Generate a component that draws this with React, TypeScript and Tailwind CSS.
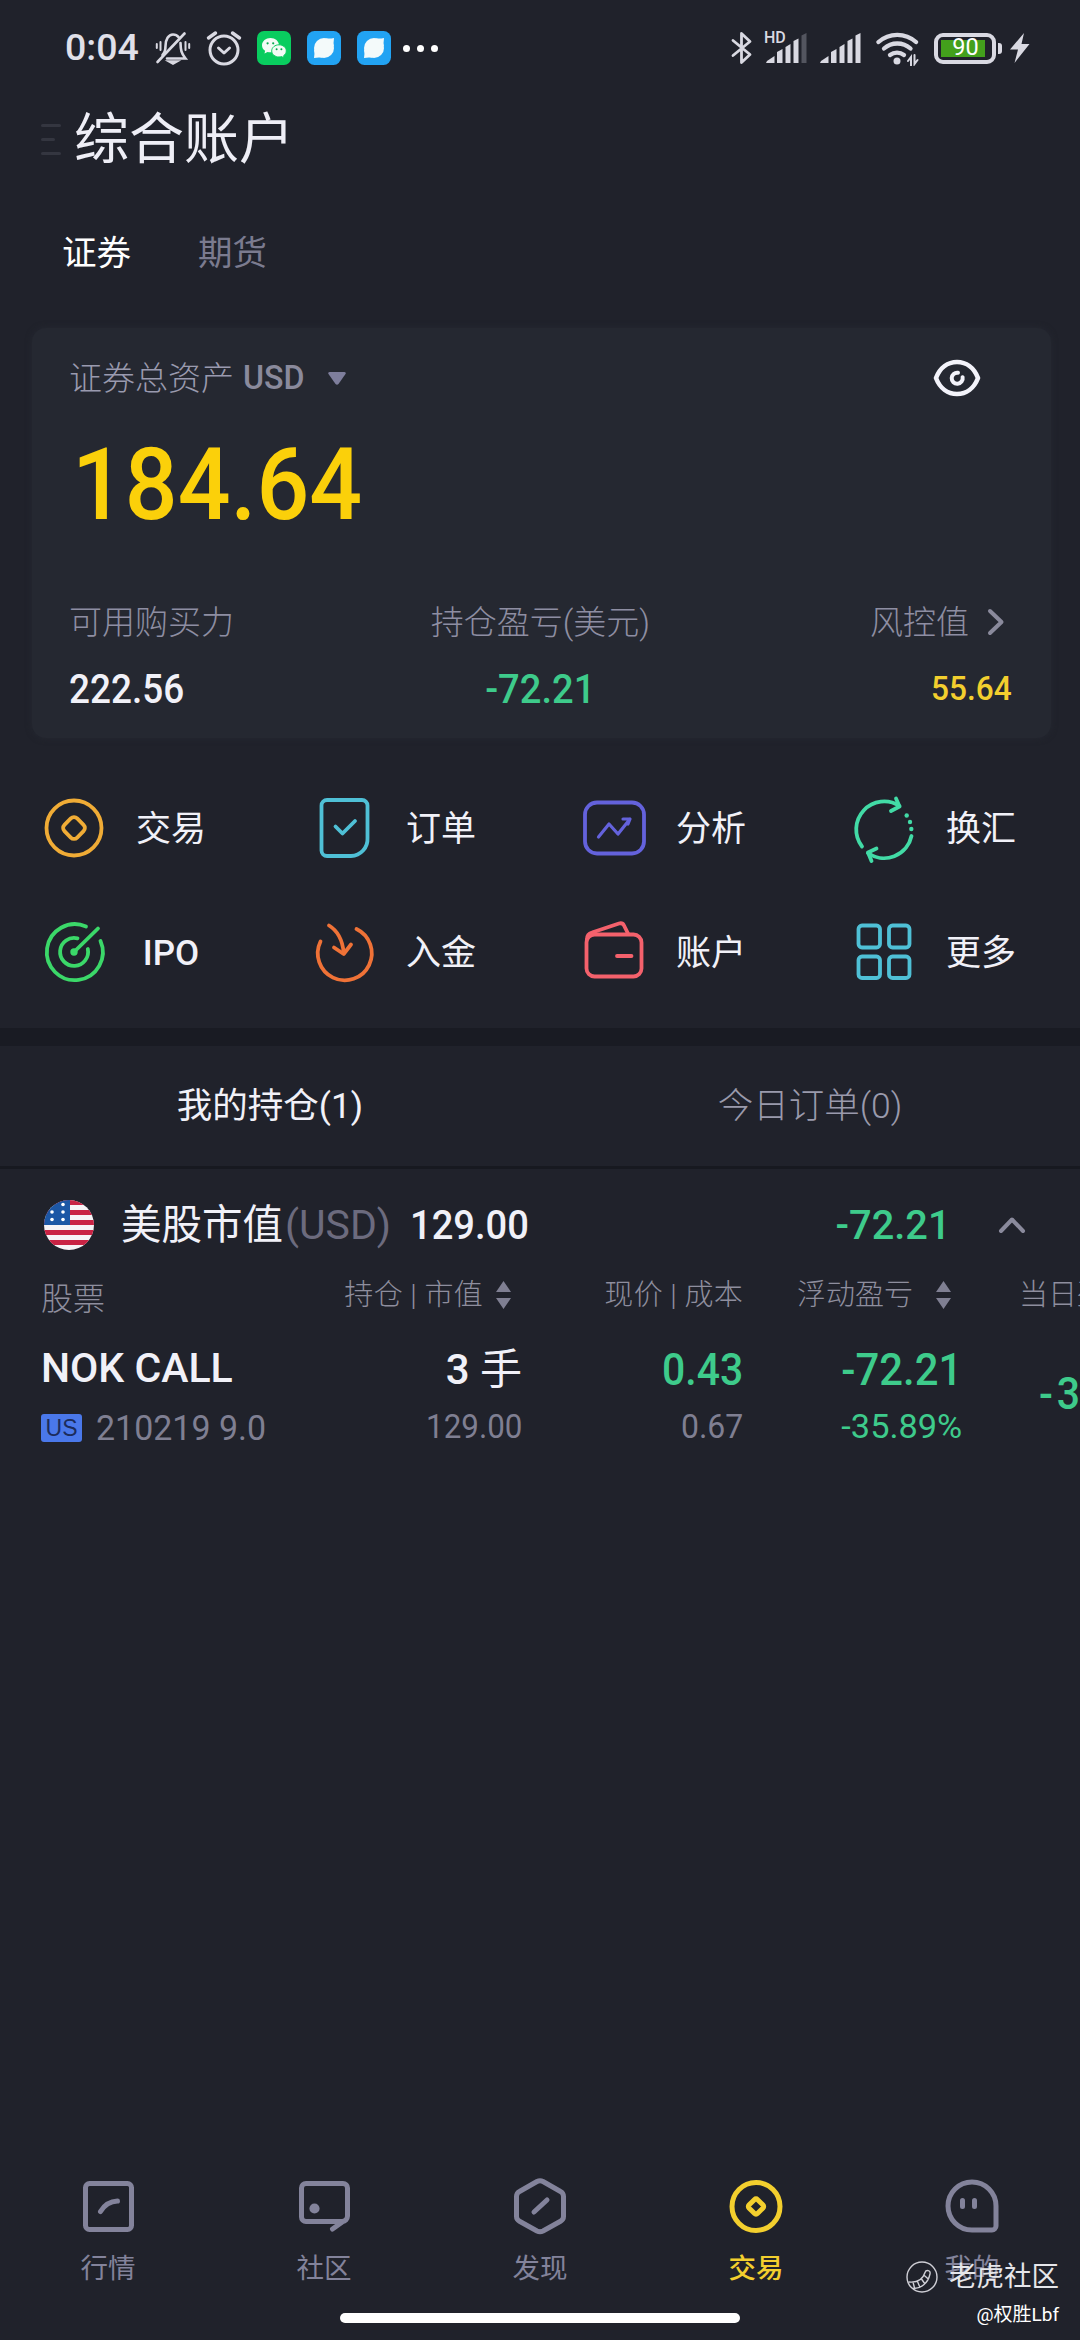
import type { ReactNode } from 'react'

type Tone = 'white' | 'green' | 'yellow' | 'gold' | 'muted'

const TONE: Record<Tone, string> = {
  white: 'text-[#f1f1f8]',
  green: 'text-[#3ecb8b]',
  yellow: 'text-[#f3cf2e]',
  gold: 'text-[#fbd00a]',
  muted: 'text-[#7f7f92]',
}

// Narrow digits, close to a DIN face
function Num({ children, tone, className, fit = 'scale-x-[0.93]' }: {
  children: ReactNode
  tone: Tone
  className: string
  fit?: string
}) {
  return (
    <span className={`inline-block whitespace-nowrap leading-none ${fit} ${TONE[tone]} ${className}`}>
      {children}
    </span>
  )
}

/* ---------- status bar ---------- */

function BellOff() {
  return (
    <svg width="36" height="36" viewBox="0 0 36 36" fill="none" stroke="#d9d9e2" strokeWidth="2.6" strokeLinecap="round">
      <path d="M7.500 25c2.500-2.500 3-5 3-9C10.500 9.500 13.500 4.500 18 4.500c2.500 0 4.300 1 5.600 2.600" />
      <path d="M25.500 13c.2 7 .7 10 5 15.500H12" />
      <path d="M29.500 3.500L2.500 32" />
      <path d="M14.500 31.500h7l-3.500 2z" fill="#d9d9e2" />
      <path d="M5.500 12v8M1.800 14v4M30.500 12v8M34.200 14v4" strokeWidth="2" />
    </svg>
  )
}

function Alarm() {
  return (
    <svg width="36" height="36" viewBox="0 0 36 36" fill="none" stroke="#d9d9e2" strokeWidth="3" strokeLinecap="round" strokeLinejoin="round">
      <circle cx="18" cy="20" r="14" />
      <path d="M12.500 18l5.500 5 5.500-5" />
      <path d="M2.500 8l7-5M33.500 8l-7-5" strokeWidth="3.400" />
    </svg>
  )
}

function WeChat() {
  return (
    <svg width="34" height="34" viewBox="0 0 34 34">
      <rect width="34" height="34" rx="7" fill="#09cd5f" />
      <path d="M13.500 7C8.800 7 5 10.200 5 14.200c0 2.300 1.200 4.300 3.100 5.600l-.6 2.700 3-1.600c1 .3 2 .4 3 .4 4.700 0 8.500-3.100 8.500-7.100S18.200 7 13.500 7z" fill="#f4fbf6" />
      <path d="M22 13.800c-4 0-7.300 2.700-7.300 6.100S18 26 22 26c.9 0 1.800-.1 2.600-.4l2.500 1.400-.5-2.300c1.600-1.100 2.700-2.900 2.700-4.800 0-3.400-3.300-6.100-7.300-6.100z" fill="#f4fbf6" stroke="#09cd5f" strokeWidth="1" />
      <g fill="#08a850">
        <circle cx="10.600" cy="12.300" r="1.100" />
        <circle cx="16.200" cy="12.300" r="1.100" />
        <circle cx="19.600" cy="18.200" r="1" />
        <circle cx="24.400" cy="18.200" r="1" />
      </g>
    </svg>
  )
}

function BlueApp() {
  return (
    <svg width="34" height="34" viewBox="0 0 34 34">
      <rect width="34" height="34" rx="7.500" fill="#22a3f3" />
      <circle cx="17" cy="17" r="10" fill="#f4fafa" />
      <path d="M18 7.200q4.500.8 9-.2-.8 4.500 0 9zM16 26.800q-4.500-.8-9 .2.800-4.500 0-9z" fill="#f4fafa" />
    </svg>
  )
}

function Bluetooth() {
  return (
    <svg width="22" height="36" viewBox="0 0 22 36" fill="none" stroke="#d9d9e2" strokeWidth="2.800" strokeLinejoin="round" strokeLinecap="round">
      <path d="M2 10.500l17 14-8.500 8V3.500l8.500 8-17 14" />
    </svg>
  )
}

function Signal({ hd }: { hd?: boolean }) {
  return (
    <div className="relative">
      {hd && <span className="absolute -top-[3px] -left-[2px] text-[16px] leading-[18px] font-medium text-[#d9d9e2]">HD</span>}
      <svg width="42" height="32" viewBox="0 0 42 32" fill="#d9d9e2">
        <path d="M0 31l1-2 7.500-5V31z" />
        <path d="M11 20l5.500-3V31H11z" />
        <path d="M19.500 15l5-3V31h-5z" />
        <path d="M27.500 9l5-2.500V31h-5z" />
        <path d="M35.500 3.500l5-2.500V31h-5z" fill={hd ? '#53555f' : '#d9d9e2'} />
      </svg>
    </div>
  )
}

function Wifi() {
  return (
    <svg width="43" height="36" viewBox="0 0 43 36" fill="none" stroke="#d9d9e2" strokeWidth="4.300" strokeLinecap="round">
      <path d="M2.500 12a28 28 0 0 1 37.500 0" />
      <path d="M8 18.500a20 20 0 0 1 26.500 0" />
      <path d="M14 25a11.500 11.500 0 0 1 14 0" />
      <circle cx="21" cy="31" r="3.500" fill="#d9d9e2" stroke="none" />
      <path d="M35 35.500V27l-3 4M38.500 25v9l3-4" strokeWidth="2" />
    </svg>
  )
}

function Battery() {
  return (
    <div className="flex items-center gap-[2px]">
      <div className="flex h-[31px] w-[62px] items-center rounded-[9px] border-[4px] border-[#d9d9e2] pl-[3px]">
        <div className="flex h-[17px] w-[44px] items-center justify-center bg-[#43a01c] pl-[5px] text-[23.500px] leading-none text-white">
          90
        </div>
      </div>
      <div className="h-[11px] w-[4px] rounded-r-[3px] bg-[#d9d9e2]" />
    </div>
  )
}

function StatusBar() {
  return (
    <div className="flex h-[96px] items-center pr-[50px] pl-[65px]">
      <span className="w-[74px] text-[37.500px] leading-none font-medium text-[#e0e0e9]">0:04</span>
      <div className="ml-[16px] flex items-center gap-[15px]">
        <BellOff />
        <Alarm />
        <div className="flex gap-[16px]">
          <WeChat />
          <BlueApp />
          <BlueApp />
        </div>
      </div>
      <div className="ml-[12px] flex gap-[7px]">
        <i className="size-[7px] rounded-full bg-white" />
        <i className="size-[7px] rounded-full bg-white" />
        <i className="size-[7px] rounded-full bg-white" />
      </div>
      <div className="ml-auto flex items-center">
        <Bluetooth />
        <div className="ml-[13px] flex gap-[12px]">
          <Signal hd />
          <Signal />
        </div>
        <div className="mr-[15px] ml-[14px]"><Wifi /></div>
        <Battery />
        <svg className="ml-[8px]" width="20" height="30" viewBox="0 0 20 30" fill="#d9d9e2">
          <path d="M14 0L0 16.500h8L4.500 30 19.500 11h-8z" />
        </svg>
      </div>
    </div>
  )
}

/* ---------- account card ---------- */

function AssetCard() {
  return (
    <section className="mr-[29px] ml-[32px] mt-[33px] flex h-[410px] flex-col rounded-[14px] bg-[#252831] pr-[39px] pl-[37px] shadow-[0_0_6px_#252831]">
      <div className="mt-[30px] flex h-[40px] items-center">
        <span className="text-[33px] leading-none font-light text-[#9a9aae]">证券总资产</span>
        <span className="ml-[9px] origin-left scale-x-[0.96] text-[33.500px] leading-none font-medium text-[#8a8a9c]">USD</span>
        <svg className="ml-[21px]" width="18" height="13" viewBox="0 0 18 13" fill="#7e7e9c">
          <path d="M1.500 0h15q2 .5 1 2l-7 10q-1.500 1.500-3 0l-7-10q-1-1.500 1-2z" />
        </svg>
        <svg className="mr-[31px] ml-auto" width="48" height="40" viewBox="0 0 48 40" fill="none" stroke="#f3f3fa" strokeWidth="4.600" strokeLinecap="round">
          <path d="M3 20C7 9.500 15 4 24 4S41 9.500 45 20C41 30.500 33 36 24 36S7 30.500 3 20z" strokeLinejoin="round" />
          <path d="M25 14.800a5.500 5.500 0 1 0 4.600 4.400" strokeWidth="4" />
        </svg>
      </div>
      <div className="mt-[33px] ml-[3px] h-[108px]">
        <Num tone="gold" className="origin-left pt-[4px] text-[100px] font-medium">184.64</Num>
      </div>
      <div className="mt-[61px] grid h-[44px] grid-cols-3 items-center text-[33px] leading-none font-light text-[#8e8ea2]">
        <span>可用购买力</span>
        <span className="whitespace-nowrap text-center">持仓盈亏(美元)</span>
        <span className="flex items-center justify-end gap-[18px] pr-[7px]">
          风控值
          <svg width="18" height="28" viewBox="0 0 18 28" fill="none" stroke="#8a8a9c" strokeWidth="4" strokeLinecap="round" strokeLinejoin="round">
            <path d="M3 3l11.500 11L3 25" />
          </svg>
        </span>
      </div>
      <div className="mt-[23px] grid h-[44px] grid-cols-3 items-center">
        <div><Num tone="white" fit="scale-x-[0.9]" className="origin-left text-[41px] font-medium">222.56</Num></div>
        <div className="text-center"><Num tone="green" className="text-[41px] font-medium">-72.21</Num></div>
        <div className="text-right"><Num tone="yellow" className="origin-right text-[34px] font-medium">55.64</Num></div>
      </div>
    </section>
  )
}

/* ---------- shortcuts ---------- */

function Glyph({ color, children }: { color: string; children: ReactNode }) {
  return (
    <svg width="66" height="66" viewBox="0 0 66 66" fill="none" stroke={color} strokeWidth="3.800" strokeLinecap="round" strokeLinejoin="round" className="overflow-visible">
      {children}
    </svg>
  )
}

const SHORTCUTS: { label: string; icon: ReactNode }[] = [
  {
    label: '交易',
    icon: (
      <Glyph color="#f0ac36">
        <circle cx="33" cy="33" r="27.500" />
        <rect x="24" y="24" width="18" height="18" rx="4.500" transform="rotate(45 33 33)" />
      </Glyph>
    ),
  },
  {
    label: '订单',
    icon: (
      <Glyph color="#4fc0d6">
        <path d="M16 5h35a5.500 5.500 0 0 1 5.500 5.500V43A17 17 0 0 1 40 61H16a5.500 5.500 0 0 1-5.500-5.500v-45A5.500 5.500 0 0 1 16 5z" />
        <path d="M24.500 31.500l7 7L44 26" />
      </Glyph>
    ),
  },
  {
    label: '分析',
    icon: (
      <Glyph color="#6462dc">
        <rect x="4" y="7.500" width="59" height="51" rx="12" />
        <path d="M17.500 42L28 29l9 10 12-15M42 24h7l-2 5" strokeWidth="3.200" />
      </Glyph>
    ),
  },
  {
    label: '换汇',
    icon: (
      <Glyph color="#42dba6">
        <path d="M11 51.500A28 28 0 0 1 48.500 11" />
        <path d="M45 3.500l3.500 8L40 16" />
        <path d="M60.500 41A28 28 0 0 1 17 58" />
        <path d="M25.500 53.500L17 57.500l3.500 8.500" />
        <g fill="#42dba6" stroke="none">
          <circle cx="55.700" cy="20.500" r="2.200" />
          <circle cx="59" cy="27" r="2.200" />
          <circle cx="60.300" cy="34" r="2.200" />
        </g>
      </Glyph>
    ),
  },
  {
    label: 'IPO',
    icon: (
      <Glyph color="#3bd869">
        <path d="M45 7.500A28 28 0 1 0 59.500 22" />
        <path d="M36.500 19.300A14 14 0 1 0 46.800 30" />
        <path d="M33 33L57 9.500" />
        <circle cx="33" cy="33" r="1.800" />
      </Glyph>
    ),
  },
  {
    label: '入金',
    icon: (
      <Glyph color="#ef7237">
        <path d="M9.500 22.500A27 27 0 1 0 45.500 10" />
        <path d="M18 6.500C27 12 31.500 20 32.700 34" />
        <path d="M23 28.500l9.700 6.500L40 25.500" />
      </Glyph>
    ),
  },
  {
    label: '账户',
    icon: (
      <Glyph color="#f4616c">
        <rect x="5.500" y="15.500" width="55" height="42" rx="8" />
        <path d="M6 20q0-5 5-6.500L38 4.500q3.500-1 5 2l4 8M36 37h14.500" />
      </Glyph>
    ),
  },
  {
    label: '更多',
    icon: (
      <Glyph color="#4fc0d6">
        <rect x="7.500" y="6.500" width="21.500" height="22" rx="3.500" />
        <rect x="38" y="6.500" width="20.500" height="22" rx="3.500" />
        <rect x="7.500" y="37.500" width="21.500" height="21.500" rx="3.500" />
        <rect x="38" y="37.500" width="20.500" height="21.500" rx="3.500" />
      </Glyph>
    ),
  },
]

function Shortcuts() {
  return (
    <section className="mt-[57px] grid grid-cols-4 gap-y-[58px] pb-[43px]">
      {SHORTCUTS.map((s) => (
        <div key={s.label} className="flex h-[66px] items-center pl-[41px]">
          {s.icon}
          <span className={`mt-[2px] ml-[24px] w-[80px] text-center text-[35px] leading-none text-[#f1f1f8] ${s.label === 'IPO' ? 'font-medium' : ''}`}>
            {s.label}
          </span>
        </div>
      ))}
    </section>
  )
}

/* ---------- positions ---------- */

function UsFlag() {
  return (
    <svg width="50" height="50" viewBox="0 0 50 50">
      <defs>
        <clipPath id="flag"><circle cx="25" cy="25" r="25" /></clipPath>
      </defs>
      <g clipPath="url(#flag)">
        <rect width="50" height="50" fill="#f6f3f6" />
        <path d="M0 0h50v5H0zM0 10h50v5H0zM0 20h50v5H0zM0 30h50v5H0zM0 40h50v5H0z" fill="#c92344" />
        <rect width="26" height="25" fill="#1c57a5" />
        <g fill="#fff">
          <circle cx="19" cy="4.500" r="1.800" />
          <circle cx="8" cy="12" r="1.800" />
          <circle cx="19" cy="12" r="1.800" />
          <circle cx="8" cy="19.500" r="1.800" />
          <circle cx="19" cy="19.500" r="1.800" />
        </g>
      </g>
    </svg>
  )
}

function SortIcon() {
  return (
    <svg width="15" height="28" viewBox="0 0 15 28" fill="#7f7f92">
      <path d="M7.500 0L15 11H0zM7.500 28L15 17H0z" />
    </svg>
  )
}

function HeadCell({ children, className = '' }: { children: ReactNode; className?: string }) {
  return (
    <div className={`mt-[20px] flex h-[44px] items-center text-[29px] leading-none font-light whitespace-nowrap text-[#8e8e9e] ${className}`}>
      {children}
    </div>
  )
}

function Positions() {
  return (
    <section className="overflow-hidden">
      <div className="mt-[28px] flex h-[56px] items-center pl-[44px]">
        <UsFlag />
        <span className="ml-[27px] text-[40.500px] leading-none text-[#f1f1f8]">美股市值</span>
        <span className="ml-[2px] text-[41px] leading-none text-[#6c6b7e]">(USD)</span>
        <Num tone="white" className="ml-[19px] origin-left text-[41px] font-medium">129.00</Num>
        <div className="ml-auto"><Num tone="green" fit="scale-x-[0.97]" className="origin-right text-[41px] font-medium">-72.21</Num></div>
        <svg className="mr-[54px] ml-[47px]" width="28" height="18" viewBox="0 0 28 18" fill="none" stroke="#8a8a9c" strokeWidth="4" strokeLinecap="round" strokeLinejoin="round">
          <path d="M3 15L14 3.500 25 15" />
        </svg>
      </div>

      <div className="grid w-[1181px] grid-cols-[260px_221px_221px_219px_219px] pl-[41px]">
        <div>
          <div className="mt-[24px] h-[44px] text-[32px] leading-[44px] font-light text-[#8e8e9e]">股票</div>
          <div className="mt-[28px] h-[52px]">
            <Num tone="white" fit="scale-x-[1.025]" className="origin-left text-[40px] leading-[52px] font-medium">NOK CALL</Num>
          </div>
          <div className="mt-[7px] flex h-[40px] items-center">
            <span className="flex h-[28px] w-[41px] items-center justify-center rounded-[3px] bg-[#4a78ea] font-['Liberation_Sans',sans-serif] text-[23px] leading-none text-[#1c2c5c]">US</span>
            <Num tone="muted" fit="scale-x-[0.97]" className="ml-[14px] origin-left text-[35px]">210219 9.0</Num>
          </div>
        </div>

        <div className="flex flex-col items-end">
          <HeadCell className="mr-[11px] gap-[13px]"><span className="tracking-[0.3px]">持仓 | 市值</span> <SortIcon /></HeadCell>
          <div className="mt-[27px] h-[52px] text-[42px] leading-[52px] font-medium text-[#f1f1f8]">
            3 <span className="font-normal">手</span>
          </div>
          <div className="mt-[14px] h-[40px]"><Num tone="muted" fit="scale-x-[0.95]" className="origin-right text-[33px] leading-[40px]">129.00</Num></div>
        </div>

        <div className="flex flex-col items-end">
          <HeadCell><span className="tracking-[0.3px]">现价 | 成本</span></HeadCell>
          <div className="mt-[31px] h-[52px]"><Num tone="green" className="origin-right text-[44px] leading-[52px] font-medium">0.43</Num></div>
          <div className="mt-[10px] h-[40px]"><Num tone="muted" fit="scale-x-[0.97]" className="origin-right text-[33px] leading-[40px]">0.67</Num></div>
        </div>

        <div className="flex flex-col items-end">
          <HeadCell className="mr-[11px] gap-[23px]">浮动盈亏 <SortIcon /></HeadCell>
          <div className="mt-[31px] h-[52px]"><Num tone="green" fit="scale-x-[0.95]" className="origin-right text-[44px] leading-[52px] font-medium">-72.21</Num></div>
          <div className="mt-[10px] h-[40px]"><Num tone="green" fit="scale-x-[1.04]" className="origin-right text-[33px] leading-[40px]">-35.89%</Num></div>
        </div>

        <div className="pl-[57px]">
          <HeadCell>当日盈亏</HeadCell>
          <div className="mt-[55px] ml-[20px] h-[52px]"><Num tone="green" className="origin-left text-[44px] leading-[52px] font-medium tracking-[4px]">-36.00</Num></div>
        </div>
      </div>
    </section>
  )
}

/* ---------- bottom navigation ---------- */

const NAV: { label: string; active?: boolean; icon: ReactNode }[] = [
  {
    label: '行情',
    icon: (
      <>
        <rect x="7.500" y="7.500" width="46" height="46" rx="4" />
        <path d="M22.500 35.500q6-10 17-10.500" />
      </>
    ),
  },
  {
    label: '社区',
    icon: (
      <>
        <path d="M38.500 53L49 45.500M12 7.500h37a4.500 4.500 0 0 1 4.500 4.500v28a5.500 5.500 0 0 1-5.500 5.500H12A4.500 4.500 0 0 1 7.500 41V12A4.500 4.500 0 0 1 12 7.500z" />
        <circle cx="20.500" cy="32.500" r="2.600" />
      </>
    ),
  },
  {
    label: '发现',
    icon: (
      <>
        <path d="M27 5.500q3-1.500 6 0l17.500 10q3 1.500 3 5v20q0 3-3 4.700L33 55q-3 1.500-6 0L9.500 45.200q-3-1.700-3-4.700v-20q0-3.500 3-5z" />
        <path d="M24 36l13-12" />
      </>
    ),
  },
  {
    label: '交易',
    active: true,
    icon: (
      <>
        <circle cx="30" cy="30.500" r="24" />
        <rect x="24" y="24.500" width="12" height="12" rx="2" transform="rotate(45 30 30.500)" />
      </>
    ),
  },
  {
    label: '我的',
    icon: (
      <>
        <path d="M54 30v20a4 4 0 0 1-4 4H30a24 24 0 1 1 24-24z" />
        <path d="M20.500 24.500v6M32.500 24.500v6" />
      </>
    ),
  },
]

function BottomNav() {
  return (
    <nav className="mt-auto flex h-[164px] flex-col items-center">
      <div className="grid w-full grid-cols-5">
        {NAV.map((n) => (
          <div key={n.label} className={`flex flex-col items-center ${n.active ? 'font-medium text-[#f3cf2e]' : 'text-[#83839b]'}`}>
            <svg width="60" height="60" viewBox="0 0 60 60" fill="none" stroke="currentColor" strokeWidth="5" strokeLinecap="round" strokeLinejoin="round">
              {n.icon}
            </svg>
            <span className="mt-[17px] text-[27.500px] leading-[32px]">{n.label}</span>
          </div>
        ))}
      </div>
      <div className="mt-auto mb-[17px] h-[10px] w-[400px] rounded-full bg-white" />
    </nav>
  )
}

function Watermark() {
  return (
    <div className="absolute right-[21px] bottom-[13px] flex flex-col items-end text-white">
      <div className="flex items-center text-[27.500px] leading-[36px] text-[#e6e6ea]">
        <svg className="mr-[11px]" width="32" height="32" viewBox="0 0 32 32" fill="none" stroke="#cfcfd6" strokeWidth="1.400">
          <circle cx="16" cy="16" r="15" />
          <path d="M2.500 21C12 22 17 18 19 11.500c1-3 6-2.500 5 1.500C22 22 15 28 7 27.500M7 21l1.500 6M11.500 20.500l2.500 6M15.500 18l3.500 5M18.300 14.500l4 3.500" />
        </svg>
        老虎社区
      </div>
      <div className="mt-[8px] text-[19px] leading-[24px]">@权胜Lbf</div>
    </div>
  )
}

export default function App() {
  return (
    <main className="relative flex h-[2340px] w-[1080px] flex-col overflow-hidden bg-[#20222b] font-['Roboto','Noto_Sans_CJK_SC',sans-serif]">
      <StatusBar />
      <header className="mt-px flex h-[84px] items-center pl-[41px]">
        <div className="flex w-[20px] flex-col gap-[11px]">
          <i className="h-[3px] rounded-full bg-[#343640]" />
          <i className="h-[3px] w-[14px] rounded-full bg-[#343640]" />
          <i className="h-[3px] rounded-full bg-[#343640]" />
        </div>
        <h1 className="ml-[13px] text-[55px] leading-none text-[#eeeef6]">综合账户</h1>
      </header>
      <div className="mt-[42px] mb-[12px] flex h-[60px] items-center gap-[67px] pl-[62px] text-[34.500px] leading-none">
        <span className="text-white">证券</span>
        <span className="text-[#7b7b8f]">期货</span>
      </div>
      <AssetCard />
      <Shortcuts />
      <div className="h-[18px] bg-[#191b23]" />
      <div className="grid h-[120px] grid-cols-2 items-center pt-[2px] text-center text-[35.500px] leading-none">
        <span className="text-[#f1f1f8]">我的持仓(1)</span>
        <span className="font-light text-[#9a9aac]">今日订单(0)</span>
      </div>
      <div className="h-[3px] bg-[#171920]" />
      <Positions />
      <BottomNav />
      <Watermark />
    </main>
  )
}
